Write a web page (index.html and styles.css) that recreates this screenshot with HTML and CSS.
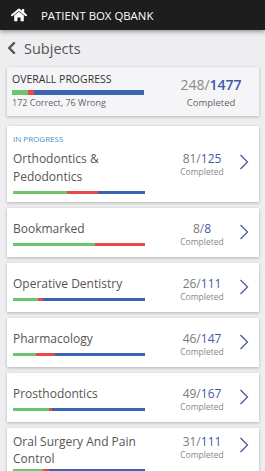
FILE: index.html
```html
<!DOCTYPE html>
<html lang="en">
<head>
    <meta charset="UTF-8">
    <meta name="viewport" content="width=device-width, initial-scale=1.0">
    <title>Patient Box QBank</title>
    <link rel="stylesheet" href="styles.css">
</head>
<body>
    <!-- Top bar -->
    <header class="top-bar">
        <svg class="home-icon" viewBox="0 0 16 14" width="16" height="14">
            <rect x="11" y="1" width="2.2" height="4" fill="#fff"/>
            <path d="M1 7.2 L8 1.6 L15 7.2" fill="none" stroke="#fff" stroke-width="2" stroke-linecap="round" stroke-linejoin="round"/>
            <path d="M3.2 7.6 L8 3.8 L12.8 7.6 V13.2 H9.6 V9.6 H6.4 V13.2 H3.2 Z" fill="#fff"/>
        </svg>
        <span class="top-title">PATIENT BOX QBANK</span>
    </header>

    <!-- Back row -->
    <div class="back-row">
        <svg class="back-icon" viewBox="0 0 9 12" width="9" height="12">
            <path d="M7 1.2 L2.2 6 L7 10.8" fill="none" stroke="#555" stroke-width="2.4" stroke-linecap="round" stroke-linejoin="round"/>
        </svg>
        <span class="back-text">Subjects</span>
    </div>

    <!-- Overall progress -->
    <div class="overall-card">
        <div class="overall-info">
            <div class="overall-title">OVERALL PROGRESS</div>
            <div class="bar bar-thick">
                <span class="seg green" style="width: 16px"></span>
                <span class="seg red" style="width: 6px"></span>
                <span class="seg blue" style="flex: 1"></span>
            </div>
            <div class="overall-sub">172 Correct, 76 Wrong</div>
        </div>
        <div class="overall-count">
            <div class="overall-num">248/<b>1477</b></div>
            <div class="overall-done">Completed</div>
        </div>
    </div>

    <!-- Subjects list -->
    <div class="subject-list" id="js-subjects"></div>

    <script>
        const subjects = [
            { name: 'Orthodontics &amp; Pedodontics', done: 81, total: 125, green: 54, red: 31, label: 'IN PROGRESS' },
            { name: 'Bookmarked', done: 8, total: 8, green: 82, red: 50 },
            { name: 'Operative Dentistry', done: 26, total: 111, green: 25, red: 5 },
            { name: 'Pharmacology', done: 46, total: 147, green: 23, red: 19 },
            { name: 'Prosthodontics', done: 49, total: 167, green: 36, red: 3 },
            { name: 'Oral Surgery And Pain Control', done: 31, total: 111, green: 30, red: 6, wrap: true }
        ];

        let html = '';
        subjects.forEach(function (s) {
            let cls = 'subject-card';
            if (s.label) cls += ' has-label';
            if (s.wrap) cls += ' two-line';
            html += `
            <div class="${cls}">
                ${s.label ? `<div class="subject-label">${s.label}</div>` : ''}
                <div class="subject-row">
                    <div class="subject-info">
                        <div class="subject-name">${s.name}</div>
                        <div class="bar">
                            <span class="seg green" style="width: ${s.green}px"></span>
                            <span class="seg red" style="width: ${s.red}px"></span>
                            <span class="seg blue" style="flex: 1"></span>
                        </div>
                    </div>
                    <div class="subject-count">
                        <div class="count-num">${s.done}/<span>${s.total}</span></div>
                        <div class="count-done">Completed</div>
                    </div>
                    <svg class="chevron" viewBox="0 0 10 16" width="10" height="16">
                        <path d="M1.5 1 L8.5 8 L1.5 15" fill="none" stroke="#4f5b9e" stroke-width="1.3"/>
                    </svg>
                </div>
            </div>`;
        });
        document.getElementById('js-subjects').innerHTML = html;
    </script>
</body>
</html>
```

FILE: styles.css
```css
body {
    margin: 0;
    background-color: #eeeef0;
    font-family: 'Open Sans', sans-serif;
    color: #555;
    width: 265px;
    overflow: hidden;
}

.top-bar {
    height: 30px;
    background-color: #1d1d1d;
    display: flex;
    align-items: center;
    padding-left: 11px;
    box-shadow: 0 2px 4px rgba(0, 0, 0, 0.35);
}

.home-icon {
    margin-right: 14px;
}

.top-title {
    color: #ffffff;
    font-size: 11.4px;
}

.back-row {
    height: 36px;
    display: flex;
    align-items: center;
    padding-left: 7px;
}

.back-icon {
    margin-right: 8px;
}

.back-text {
    font-size: 14.5px;
    color: #555;
}

.overall-card {
    margin: 1px 6px 0 7px;
    height: 49px;
    box-sizing: border-box;
    background-color: #f5f5f7;
    box-shadow: 0 1px 3px rgba(0, 0, 0, 0.25);
    display: flex;
    padding: 6px 0 0 5px;
}

.overall-info {
    width: 133px;
}

.overall-title {
    font-size: 10.5px;
    line-height: 13px;
    color: #333;
}

.overall-sub {
    font-size: 9px;
    line-height: 12px;
    color: #666;
    margin-top: 2px;
}

.overall-count {
    flex: 1;
    text-align: center;
    padding-left: 18px;
}

.overall-num {
    font-size: 14px;
    line-height: 20px;
    margin-top: 2px;
    color: #8a8a8a;
}

.overall-num b {
    color: #3e5aa8;
    font-weight: 600;
}

.overall-done {
    font-size: 9.5px;
    line-height: 13px;
    margin-top: 1px;
    color: #666;
}

.bar {
    display: flex;
    height: 3px;
    width: 132px;
    margin-top: 5px;
}

.bar-thick {
    height: 5px;
    margin-top: 4px;
}

.seg {
    display: block;
    height: 100%;
}

.green {
    background-color: #6cc46f;
}

.red {
    background-color: #e54a4a;
}

.blue {
    background-color: #3a64b2;
}

.subject-list {
    padding: 10px 6px 0 7px;
    display: flex;
    flex-direction: column;
    gap: 6px;
}

.subject-card {
    background-color: #ffffff;
    box-shadow: 0 1px 3px rgba(0, 0, 0, 0.25);
    padding: 12px 0 11px 6px;
}

.subject-card.has-label {
    padding-top: 7px;
    padding-bottom: 8px;
}

.subject-card.two-line {
    padding-top: 5px;
}

.two-line .subject-name {
    line-height: 17px;
}

.two-line .bar {
    margin-top: 2px;
}

.subject-label {
    font-size: 8px;
    line-height: 12px;
    color: #4a90c8;
    margin-bottom: 5px;
}

.subject-row {
    display: flex;
    align-items: flex-start;
}

.subject-info {
    width: 132px;
}

.subject-name {
    font-size: 12px;
    line-height: 18px;
    color: #555;
}

.subject-count {
    flex: 1;
    text-align: center;
    padding-left: 28px;
    margin-top: 2px;
    margin-bottom: -4px;
}

.count-num {
    font-size: 12px;
    line-height: 14px;
    color: #7a7a7a;
}

.count-num span {
    color: #3e5aa8;
}

.count-done {
    font-size: 8.5px;
    line-height: 12px;
    color: #888;
}

.chevron {
    margin: 4px 10px 0 8px;
}
```
